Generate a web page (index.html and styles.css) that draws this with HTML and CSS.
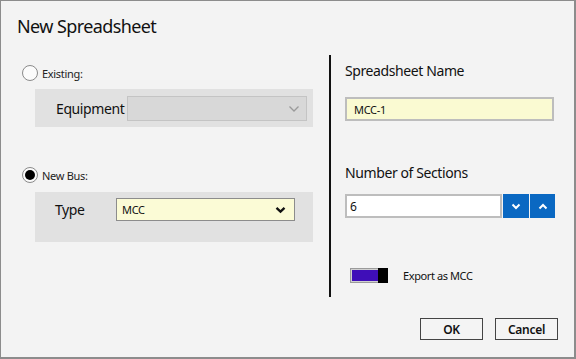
FILE: index.html
```html
<!DOCTYPE html>
<html>
<head>
<meta charset="utf-8">
<link rel="stylesheet" href="styles.css">
</head>
<body>
<div class="window">
  <div class="title">New Spreadsheet</div>
  <div class="main">
    <div class="left">
      <div class="radio-row first">
        <span class="radio"></span><span class="radio-label">Existing:</span>
      </div>
      <div class="panel panel-existing">
        <span class="field-label equip">Equipment</span>
        <div class="combo combo-disabled">
          <svg class="chev" width="12" height="8" viewBox="0 0 12 8"><path d="M1.5 1.5 L6 6 L10.5 1.5" fill="none" stroke="#9a9a9a" stroke-width="1.3"/></svg>
        </div>
      </div>
      <div class="radio-row second">
        <span class="radio checked"><span class="dot"></span></span><span class="radio-label">New Bus:</span>
      </div>
      <div class="panel panel-new">
        <span class="field-label type">Type</span>
        <div class="combo combo-type">
          <span class="combo-text">MCC</span>
          <svg class="chev" width="11" height="8" viewBox="0 0 11 8"><path d="M1.5 1.8 L5.5 5.6 L9.5 1.8" fill="none" stroke="#111" stroke-width="2.3"/></svg>
        </div>
      </div>
    </div>
    <div class="divider"></div>
    <div class="right">
      <div class="heading h1">Spreadsheet Name</div>
      <div class="input input-name">MCC-1</div>
      <div class="heading h2">Number of Sections</div>
      <div class="num-row">
        <div class="input input-num">6</div>
        <button class="spin spin-down"><svg width="10" height="7" viewBox="0 0 10 7"><path d="M1.5 1.5 L5 5 L8.5 1.5" fill="none" stroke="#fff" stroke-width="2"/></svg></button>
        <button class="spin spin-up"><svg width="10" height="7" viewBox="0 0 10 7"><path d="M1.5 5.5 L5 2 L8.5 5.5" fill="none" stroke="#fff" stroke-width="2"/></svg></button>
      </div>
      <div class="toggle-row">
        <span class="toggle"><span class="track"></span><span class="thumb"></span></span>
        <span class="toggle-label">Export as MCC</span>
      </div>
    </div>
  </div>
  <div class="footer">
    <button class="btn">OK</button>
    <button class="btn">Cancel</button>
  </div>
</div>
</body>
</html>
```
FILE: styles.css
```css
* { box-sizing: border-box; }
html, body { margin: 0; padding: 0; background: #f3f3f3; }
body { font-family: "Noto Sans", "Open Sans", sans-serif; color: #111; }

.window {
  width: 576px;
  height: 359px;
  background: #f3f3f3;
  border-top: 1px solid #8c8c8c;
  border-left: 1px solid #8c8c8c;
  border-right: 2px solid #8c8c8c;
  border-bottom: 2px solid #8c8c8c;
  padding-top: 13px;
  display: flex;
  flex-direction: column;
}

.title {
  font-size: 18px;
  line-height: 24px;
  margin-left: 16px;
  letter-spacing: -0.6px;
  color: #111;
}

.main {
  margin-top: 17px;
  display: flex;
  height: 242px;
}

.left {
  width: 291px;
  margin-left: 21px;
}

.radio-row {
  display: flex;
  align-items: center;
  height: 16px;
}
.radio-row.first { margin-top: 10px; }
.radio-row.second { margin-top: 40px; }

.radio {
  width: 16px;
  height: 16px;
  border-radius: 50%;
  border: 1px solid #8a8a8a;
  background: #fbfbfb;
  display: flex;
  align-items: center;
  justify-content: center;
}
.radio .dot {
  width: 10px;
  height: 10px;
  border-radius: 50%;
  background: #000;
}
.radio-label {
  font-size: 11px;
  margin-left: 4px;
  letter-spacing: -0.3px;
  color: #222;
}

.panel {
  margin-left: 13px;
  width: 278px;
  background: #e1e1e1;
  display: flex;
  align-items: flex-start;
}
.panel-existing {
  margin-top: 8px;
  height: 38px;
  padding-top: 7px;
}
.panel-new {
  margin-top: 9px;
  height: 50px;
  padding-top: 6px;
}

.field-label {
  font-size: 14px;
  color: #111;
  letter-spacing: -0.4px;
}
.field-label.equip {
  width: 92px;
  padding-left: 21px;
  line-height: 25px;
}
.field-label.type {
  width: 81px;
  padding-left: 20px;
  line-height: 23px;
}

.combo {
  display: flex;
  align-items: center;
  justify-content: space-between;
}
.combo-disabled {
  width: 180px;
  height: 25px;
  background: #d8d8d8;
  border: 1px solid #c4c4c4;
  justify-content: flex-end;
  padding-right: 6px;
}
.combo-type {
  width: 179px;
  height: 23px;
  background: #fbfbd6;
  border: 1px solid #8c8c8c;
  padding: 0 8px 0 5px;
}
.combo-text {
  font-size: 11px;
  letter-spacing: -0.3px;
  color: #111;
}

.divider {
  width: 2px;
  background: #111;
  margin-left: 16px;
}

.right {
  margin-left: 14px;
  width: 210px;
}

.heading {
  font-size: 14px;
  line-height: 20px;
  color: #111;
  letter-spacing: -0.4px;
}
.h1 { margin-top: 6px; }
.h2 { margin-top: 42px; }

.input {
  height: 24px;
  border: 2px solid #bdbdbd;
  font-size: 11px;
  display: flex;
  align-items: center;
  color: #111;
}
.input-name {
  margin-top: 16px;
  width: 209px;
  background: #fafad2;
  padding-left: 7px;
  letter-spacing: -0.3px;
}

.num-row {
  margin-top: 11px;
  display: flex;
  gap: 1px;
}
.input-num {
  width: 157px;
  background: #fff;
  padding-left: 3px;
  font-size: 12px;
}
.spin {
  width: 25px;
  height: 24px;
  border: none;
  margin: 0;
  padding: 0;
  background: #0a68c2;
  display: flex;
  align-items: center;
  justify-content: center;
}
.spin-down { width: 26px; }

.toggle-row {
  margin-top: 50px;
  display: flex;
  align-items: center;
  height: 15px;
}
.toggle {
  margin-left: 5px;
  width: 38px;
  height: 15px;
  display: flex;
  border: 1px solid #9a9a9a;
  background: #d0d0d0;
}
.toggle .track {
  flex: 1;
  background: #3f0eb8;
  margin: 1px 0 1px 1px;
}
.toggle .thumb {
  width: 10px;
  background: #000;
  margin: -1px -1px -1px 0;
}
.toggle-label {
  margin-left: 15px;
  font-size: 11px;
  letter-spacing: -0.4px;
  color: #111;
}

.footer {
  margin-top: 21px;
  display: flex;
  justify-content: flex-end;
  gap: 12px;
  padding-right: 16px;
}
.btn {
  width: 63px;
  height: 22px;
  border: 1px solid #444;
  background: #f4f4f4;
  font-family: "Noto Sans", "Open Sans", sans-serif;
  font-size: 12px;
  font-weight: 600;
  letter-spacing: -0.3px;
  color: #111;
  padding: 0;
  margin: 0;
}
```
